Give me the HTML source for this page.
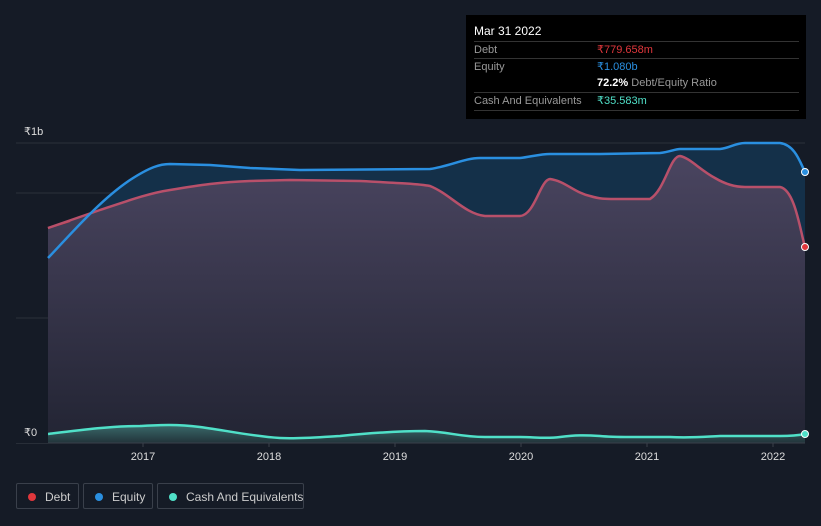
<!DOCTYPE html><html><head><style>
html,body{margin:0;width:821px;height:526px;background:#151b26;font-family:"Liberation Sans",sans-serif;overflow:hidden;position:relative}
.tt{position:absolute;left:466px;top:15px;width:340px;height:104px;background:#000;font-size:11px;color:#999}
.tt .h{position:absolute;left:8px;top:9px;color:#fff;font-size:12px}
.row{position:absolute;left:8px;width:325px;border-top:1px solid #333;height:17px;line-height:17px}
.row span{position:absolute;left:123px}
.lg{position:absolute;top:483px;height:26px;border:1px solid #3a404b;border-radius:2px;color:#ccc;font-size:12px;line-height:26px;box-sizing:border-box;white-space:nowrap}
.lg i{position:absolute;left:11px;top:9px;width:8px;height:8px;border-radius:50%}
</style></head><body>
<svg width="821" height="526" style="position:absolute;left:0;top:0">
<defs>
<linearGradient id="g" x1="0" y1="0" x2="0" y2="1"><stop offset="0" stop-color="#4a4560"/><stop offset="1" stop-color="#222433"/></linearGradient>
<linearGradient id="c" x1="0" y1="0" x2="0" y2="1"><stop offset="0" stop-color="#3a6a6a"/><stop offset="1" stop-color="#22333a"/></linearGradient>
</defs>
<line x1="16" y1="143" x2="805" y2="143" stroke="#2a303b"/>
<line x1="16" y1="193" x2="805" y2="193" stroke="#2a303b"/>
<line x1="16" y1="318" x2="805" y2="318" stroke="#2a303b"/>
<path d="M48,258 C70,235 100,200 130,180 C150,167 160,164 170,164 L210,165 L250,168 L300,170 L430,169 C450,166 465,158 480,158 L520,158 C530,157 540,154 550,154 L600,154 L660,153 C670,152 675,149 680,149 L720,149 C730,148 735,143 745,143 L780,143 C795,145 800,162 805,172 L805,443 L48,443Z" fill="#143049"/>
<path d="M48,228 L100,210 C130,200 150,193 170,190 C200,185 220,182 250,181 L290,180 L360,181 C400,183 420,184 430,186 C450,194 465,214 485,216 L520,216 C535,215 540,180 550,179 C565,181 575,193 590,196 C600,199 605,199 615,199 L650,199 C665,190 670,156 680,156 C690,158 700,170 715,178 C725,184 735,187 745,187 L780,187 C795,190 800,230 805,247 L805,443 L48,443Z" fill="url(#g)"/>
<path d="M48,228 L70,221" stroke="#e0373c" stroke-width="2" fill="none"/>
<path d="M48,228 L100,210 C130,200 150,193 170,190 C200,185 220,182 250,181 L290,180 L360,181 C400,183 420,184 430,186 C450,194 465,214 485,216 L520,216 C535,215 540,180 550,179 C565,181 575,193 590,196 C600,199 605,199 615,199 L650,199 C665,190 670,156 680,156 C690,158 700,170 715,178 C725,184 735,187 745,187 L780,187 C795,190 800,230 805,247" stroke="#b8506a" stroke-width="2.5" fill="none"/>
<path d="M48,258 C70,235 100,200 130,180 C150,167 160,164 170,164 L210,165 L250,168 L300,170 L430,169 C450,166 465,158 480,158 L520,158 C530,157 540,154 550,154 L600,154 L660,153 C670,152 675,149 680,149 L720,149 C730,148 735,143 745,143 L780,143 C795,145 800,162 805,172" stroke="#2a8fe0" stroke-width="2.5" fill="none"/>
<path d="M48,434 C80,430 110,426 140,426 C160,425 175,424 200,427 C230,431 250,436 280,438 C300,439 320,437 340,436 C370,433 400,431 425,431 C450,432 460,437 485,437 L520,437 C535,437 545,439 560,437 C575,435 585,435 600,436 C610,437 615,437 630,437 L670,437 C690,438 700,437 720,436 L780,436 C790,436 800,435 805,434 L805,443 L48,443Z" fill="url(#c)"/>
<path d="M48,434 C80,430 110,426 140,426 C160,425 175,424 200,427 C230,431 250,436 280,438 C300,439 320,437 340,436 C370,433 400,431 425,431 C450,432 460,437 485,437 L520,437 C535,437 545,439 560,437 C575,435 585,435 600,436 C610,437 615,437 630,437 L670,437 C690,438 700,437 720,436 L780,436 C790,436 800,435 805,434" stroke="#50e0c8" stroke-width="2.5" fill="none"/>
<line x1="16" y1="443" x2="805" y2="443" stroke="#3a404b"/>
<rect x="16" y="424" width="32" height="19" fill="#151b26"/>
<text x="24" y="135" fill="#ddd" font-size="11" font-family="Liberation Sans">₹1b</text>
<text x="24" y="436" fill="#ddd" font-size="11" font-family="Liberation Sans">₹0</text>
<g stroke="#3a404b"><line x1="143" y1="443" x2="143" y2="447"/><line x1="269" y1="443" x2="269" y2="447"/><line x1="395" y1="443" x2="395" y2="447"/><line x1="521" y1="443" x2="521" y2="447"/><line x1="647" y1="443" x2="647" y2="447"/><line x1="773" y1="443" x2="773" y2="447"/></g>
<g fill="#ddd" font-size="11" font-family="Liberation Sans" text-anchor="middle"><text x="143" y="460">2017</text><text x="269" y="460">2018</text><text x="395" y="460">2019</text><text x="521" y="460">2020</text><text x="647" y="460">2021</text><text x="773" y="460">2022</text></g>
<circle cx="805" cy="247" r="3.5" fill="#e0373c" stroke="#fff" stroke-width="1"/>
<circle cx="805" cy="172" r="3.5" fill="#2a8fe0" stroke="#fff" stroke-width="1"/>
<circle cx="805" cy="434" r="3.5" fill="#50e0c8" stroke="#fff" stroke-width="1"/>
</svg>
<div class="tt"><div class="h">Mar 31 2022</div>
<div class="row" style="top:26px">Debt<span style="color:#e0373c">₹779.658m</span></div>
<div class="row" style="top:43px">Equity<span style="color:#2a8fe0">₹1.080b</span></div>
<div class="row" style="top:60px;border:none"><span style="color:#999"><b style="color:#fff">72.2%</b> Debt/Equity Ratio</span></div>
<div class="row" style="top:77px;border-bottom:1px solid #333">Cash And Equivalents<span style="color:#50e0c8">₹35.583m</span></div>
</div>
<div class="lg" style="left:16px;width:63px"><i style="background:#e0373c"></i><span style="position:absolute;left:28px">Debt</span></div>
<div class="lg" style="left:83px;width:70px"><i style="background:#2a8fe0"></i><span style="position:absolute;left:28px">Equity</span></div>
<div class="lg" style="left:157px;width:147px"><i style="background:#50e0c8"></i><span style="position:absolute;left:28px">Cash And Equivalents</span></div>
</body></html>
